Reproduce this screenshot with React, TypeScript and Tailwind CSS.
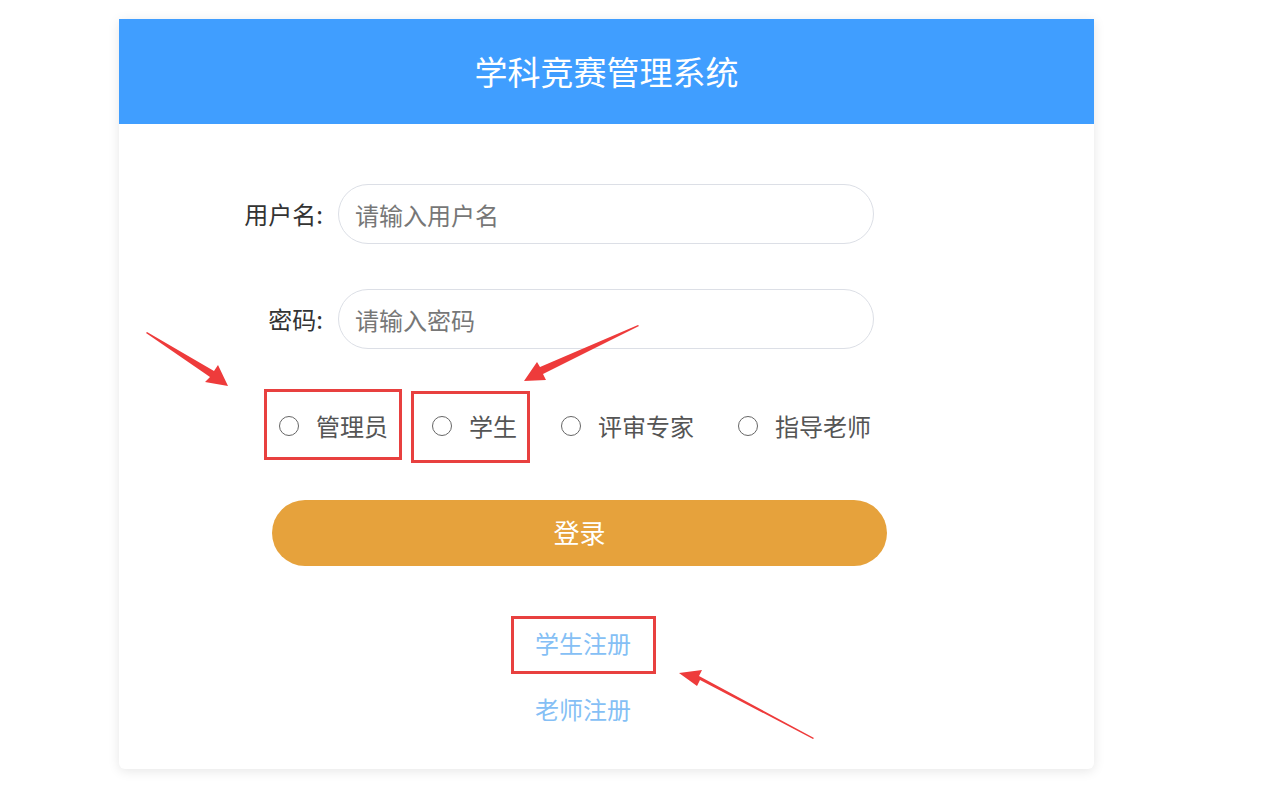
import { useState } from 'react'

const roles = ['管理员', '学生', '评审专家', '指导老师']

export default function App() {
  const [role, setRole] = useState('')
  const [username, setUsername] = useState('')
  const [password, setPassword] = useState('')

  return (
    <div className="relative min-h-[793px] w-[1272px] bg-white pt-[19px] pl-[119px] font-['Noto_Sans_CJK_SC','Noto_Sans',sans-serif]">
      <div className="w-[975px] h-[750px] bg-white rounded-b-md shadow-[0_2px_12px_rgba(0,0,0,0.1)] flex flex-col">
        <div className="h-[105px] bg-[#409eff] flex items-center justify-center">
          <h1 className="text-white text-[33px] leading-none">学科竞赛管理系统</h1>
        </div>

        <div className="pt-[60px] flex flex-col gap-[45px]">
          <div className="flex items-center">
            <label className="w-[206px] text-right text-[24px] text-[#333] pr-[2px]">用户名:</label>
            <input value={username} onChange={(e) => setUsername(e.target.value)} placeholder="请输入用户名"
              className="ml-[13px] w-[536px] h-[60px] rounded-full border border-[#dcdfe6] px-[16px] text-[24px] text-[#333] placeholder:text-[#777] outline-none" />
          </div>
          <div className="flex items-center">
            <label className="w-[206px] text-right text-[24px] text-[#333] pr-[2px]">密码:</label>
            <input type="password" value={password} onChange={(e) => setPassword(e.target.value)} placeholder="请输入密码"
              className="ml-[13px] w-[536px] h-[60px] rounded-full border border-[#dcdfe6] px-[16px] text-[24px] text-[#333] placeholder:text-[#777] outline-none" />
          </div>
        </div>

        <div className="mt-[57px] h-[40px] pl-[160px] flex items-center gap-[44px]">
          {roles.map((r) => (
            <label key={r} className="flex items-center gap-[17px] cursor-pointer" onClick={() => setRole(r)}>
              <span className={`w-[20px] h-[20px] rounded-full border ${role === r ? 'border-[#409eff] border-[6px]' : 'border-[#666]'}`} />
              <span className="text-[24px] text-[#555] leading-none">{r}</span>
            </label>
          ))}
        </div>

        <button className="mt-[54px] ml-[153px] w-[615px] h-[66px] rounded-full bg-[#e6a23c] text-white text-[26px] leading-none pb-[3px]">登录</button>

        <div className="mt-[65px] flex flex-col items-center gap-[42px] pr-[47px]">
          <a className="text-[24px] leading-none text-[#85bff5] cursor-pointer">学生注册</a>
          <a className="text-[24px] leading-none text-[#85bff5] cursor-pointer">老师注册</a>
        </div>
      </div>

      {/* annotations */}
      <div className="absolute left-[264px] top-[389px] w-[138px] h-[71px] border-[3px] border-[#e8403f]" />
      <div className="absolute left-[411px] top-[391px] w-[119px] h-[72px] border-[3px] border-[#e8403f]" />
      <div className="absolute left-[511px] top-[616px] w-[145px] h-[58px] border-[3px] border-[#e8403f]" />
      <svg className="absolute left-0 top-0 pointer-events-none" width="1272" height="793">
        <g fill="#ee3b3b">
          <polygon points="146,333 147,332 214,371 218,365 228,386 205,382 210,377" />
          <polygon points="638,325 639,326 543,374 546,380 524,381 537,362 540,367" />
          <polygon points="814,738 813,739 700,680 697,686 679,673 702,670 699,676" />
        </g>
      </svg>
    </div>
  )
}
